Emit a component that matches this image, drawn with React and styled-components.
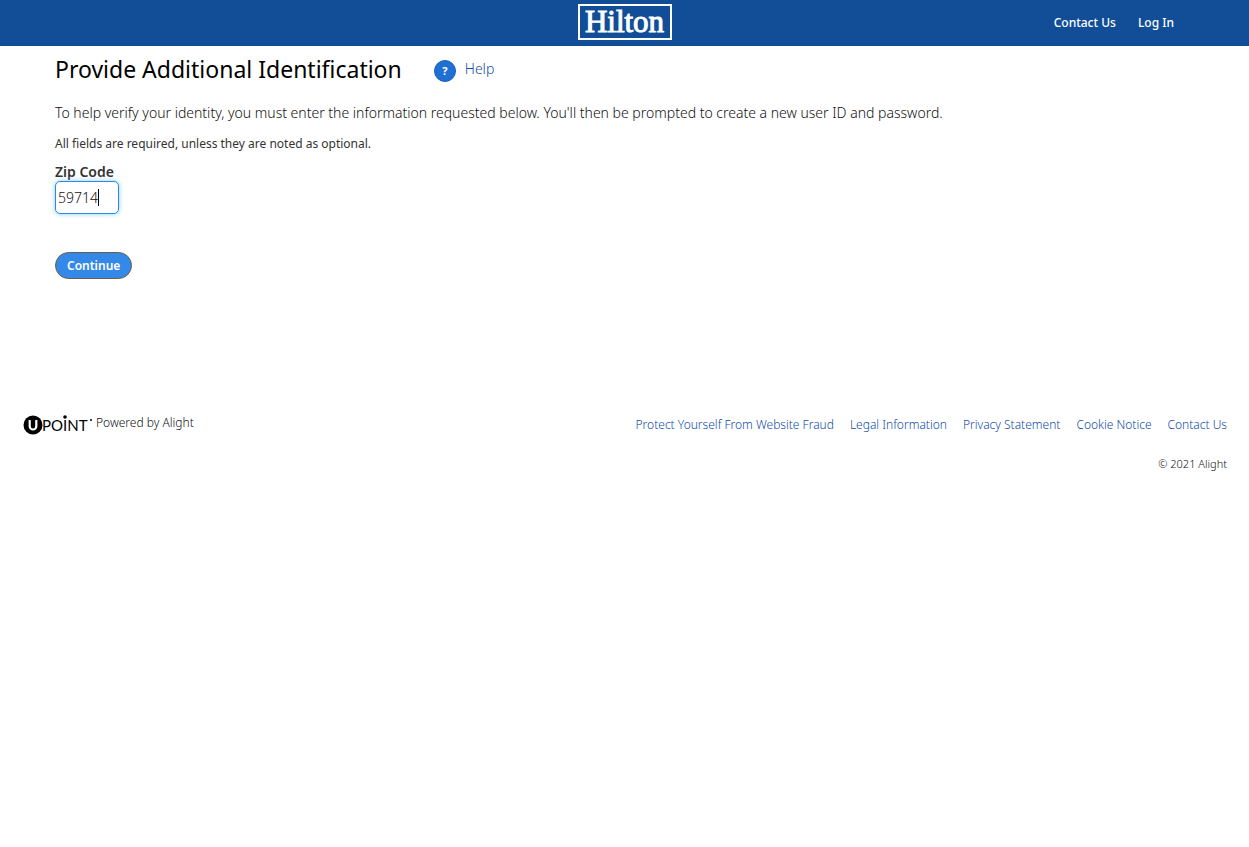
import React, { useState } from 'react';
import styled, { createGlobalStyle } from 'styled-components';

const GlobalStyle = createGlobalStyle`
  *, *::before, *::after { box-sizing: border-box; }
  body {
    margin: 0;
    background: #fff;
    color: #111;
    font-family: "Noto Sans", "Open Sans", sans-serif;
    font-size: 14px;
    font-weight: 300;
    line-height: 20px;
  }
`;

const TopBar = styled.header`
  display: grid;
  grid-template-columns: 1fr auto 1fr;
  align-items: center;
  height: 46px;
  padding: 0 75px;
  background: #114e97;
`;

const BrandLink = styled.a`
  grid-column: 2;
  display: flex;
  align-items: center;
  justify-content: center;
  width: 94px;
  height: 36px;
  margin-bottom: 2px;
  border: 2px solid #fff;
  color: #fff;
  font: 400 31px/32px "Liberation Serif", serif;
  -webkit-text-stroke: 1px #fff;
  text-decoration: none;
`;

const TopNav = styled.nav`
  display: flex;
  justify-content: flex-end;
  gap: 22px;
`;

const TopLink = styled.a`
  color: #fff;
  font-size: 12px;
  font-weight: 500;
  text-decoration: none;
`;

const Main = styled.main`
  padding: 8px 55px 0;
`;

const TitleRow = styled.div`
  display: flex;
  align-items: center;
  gap: 32px;
`;

const Title = styled.h1`
  margin: 0;
  color: #000;
  font-size: 23px;
  font-weight: 400;
  line-height: 30px;
`;

const HelpLink = styled.a`
  display: flex;
  align-items: center;
  gap: 9px;
  color: #0f4bab;
  text-decoration: none;
`;

const HelpBadge = styled.span`
  display: flex;
  align-items: center;
  justify-content: center;
  width: 22px;
  height: 22px;
  margin-top: 3px;
  border: 1px solid #1660bd;
  border-radius: 50%;
  background: #1f70d2;
  color: #fff;
  font-size: 11px;
  font-weight: 700;
`;

const Intro = styled.p`
  margin: 19px 0 0;
`;

const Note = styled.p`
  margin: 11px 0 0;
  color: #333;
  font-size: 12px;
  font-weight: 400;
`;

const Form = styled.form`
  display: flex;
  flex-direction: column;
  align-items: flex-start;
  margin-top: 9px;
`;

const Label = styled.label`
  color: #333;
  font-size: 14px;
  font-weight: 600;
  line-height: 18px;
`;

const Field = styled.div`
  position: relative;
  display: flex;
`;

const ZipInput = styled.input`
  width: 64px;
  height: 33px;
  padding: 0 2px;
  border: 1px solid #2f86e8;
  border-radius: 5px;
  outline: none;
  background: #fff;
  box-shadow: 0 0 5px #7fd0f5;
  color: #111;
  caret-color: transparent;
  font: 300 14px/20px "Noto Sans", sans-serif;
`;

const Caret = styled.span`
  position: absolute;
  top: 8px;
  left: 43px;
  width: 1px;
  height: 17px;
  background: #000;
  pointer-events: none;
`;

const ContinueButton = styled.button`
  height: 27px;
  margin-top: 38px;
  padding: 0 11px;
  border: 1px solid #6b6046;
  border-radius: 14px;
  background: #3388e8;
  color: #fff;
  font: 600 12px/20px "Noto Sans", sans-serif;
`;

const Footer = styled.footer`
  display: flex;
  justify-content: space-between;
  align-items: flex-start;
  margin-top: 133px;
  padding: 0 22px 0 23px;
  font-size: 12px;
`;

const Powered = styled.div`
  display: flex;
  align-items: flex-start;
  gap: 4px;
  line-height: 22px;
`;

const UPointLogo = styled.svg`
  display: block;
  width: 69px;
  height: 24px;
`;

const FooterRight = styled.div`
  display: flex;
  flex-direction: column;
  align-items: flex-end;
  gap: 19px;
  padding-top: 3px;
`;

const FooterNav = styled.nav`
  display: flex;
  gap: 16px;
`;

const FooterLink = styled.a`
  color: #0f4bab;
  text-decoration: none;
`;

const Copyright = styled.small`
  font-size: 11px;
`;

const footerLinks = [
  'Protect Yourself From Website Fraud',
  'Legal Information',
  'Privacy Statement',
  'Cookie Notice',
  'Contact Us',
];

export default function App() {
  const [zip, setZip] = useState('59714');
  return (
    <>
      <GlobalStyle />
      <TopBar>
        <BrandLink href="#home">Hilton</BrandLink>
        <TopNav>
          <TopLink href="#contact">Contact Us</TopLink>
          <TopLink href="#login">Log In</TopLink>
        </TopNav>
      </TopBar>
      <Main>
        <TitleRow>
          <Title>Provide Additional Identification</Title>
          <HelpLink href="#help">
            <HelpBadge aria-hidden="true">?</HelpBadge>
            Help
          </HelpLink>
        </TitleRow>
        <Intro>
          To help verify your identity, you must enter the information requested below. You'll then be prompted to create a new user ID and password.
        </Intro>
        <Note>All fields are required, unless they are noted as optional.</Note>
        <Form onSubmit={(event) => event.preventDefault()}>
          <Label htmlFor="zip">Zip Code</Label>
          <Field>
            <ZipInput
              id="zip"
              value={zip}
              onChange={(event) => setZip(event.target.value)}
            />
            <Caret aria-hidden="true" />
          </Field>
          <ContinueButton type="submit">Continue</ContinueButton>
        </Form>
      </Main>
      <Footer>
        <Powered>
          <UPointLogo viewBox="0 0 69 24" role="img" aria-label="UPoint">
            <circle cx="10" cy="13" r="9.5" fill="#000" />
            <path d="M6.7 8v6.2a3.3 3.3 0 0 0 6.6 0V8" fill="none" stroke="#fff" strokeWidth="2.2" />
            <text x="19" y="19" fontFamily="Lato, sans-serif" fontSize="15" fontWeight="400" fill="#000">POINT</text>
            <circle cx="42" cy="5" r="1.8" fill="#000" />
            <circle cx="68" cy="8" r="1" fill="#000" />
          </UPointLogo>
          <span>Powered by Alight</span>
        </Powered>
        <FooterRight>
          <FooterNav>
            {footerLinks.map((text) => (
              <FooterLink key={text} href="#footer">{text}</FooterLink>
            ))}
          </FooterNav>
          <Copyright>© 2021 Alight</Copyright>
        </FooterRight>
      </Footer>
    </>
  );
}
